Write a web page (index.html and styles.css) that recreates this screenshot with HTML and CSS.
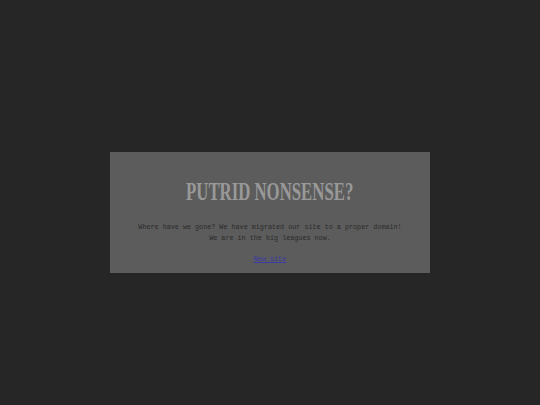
FILE: index.html
```html
<!DOCTYPE html>
<html>
<head>
<meta charset="utf-8">
<link rel="stylesheet" href="styles.css">
<title>Putrid Nonsense?</title>
</head>
<body>
<div class="page">
  <div class="box">
    <h1 class="title"><span class="title-text">PUTRID NONSENSE?</span></h1>
    <p class="msg">Where have we gone? We have migrated our site to a proper domain!<br>We are in the big leagues now.</p>
    <p class="link-line"><a class="link" href="#">New site</a></p>
  </div>
</div>
</body>
</html>
```
FILE: styles.css
```css
html, body {
  margin: 0;
  padding: 0;
  background: #262626;
}
.page {
  width: 540px;
  height: 405px;
  display: flex;
  flex-direction: column;
  align-items: center;
  padding-top: 152px;
  box-sizing: border-box;
}
.box {
  width: 320px;
  height: 121px;
  box-sizing: border-box;
  background: #5c5c5c;
  padding-top: 25px;
  display: flex;
  flex-direction: column;
  align-items: center;
}
.title {
  margin: 0;
  font-family: "Liberation Serif", serif;
  font-weight: bold;
  font-size: 26px;
  line-height: 30px;
  height: 30px;
  color: #999999;
  white-space: nowrap;
}
.title-text {
  display: inline-block;
  transform: scaleX(0.645);
}
.msg {
  margin: 14.5px 0 0 0;
  font-family: "Liberation Mono", monospace;
  font-size: 6.75px;
  line-height: 11px;
  color: #2b2b2b;
  text-align: center;
}
.link-line {
  margin: 10px 0 0 0;
  font-family: "Liberation Mono", monospace;
  font-size: 6.75px;
  line-height: 11px;
  text-align: center;
}
.link {
  color: #3a3aa8;
}
```
